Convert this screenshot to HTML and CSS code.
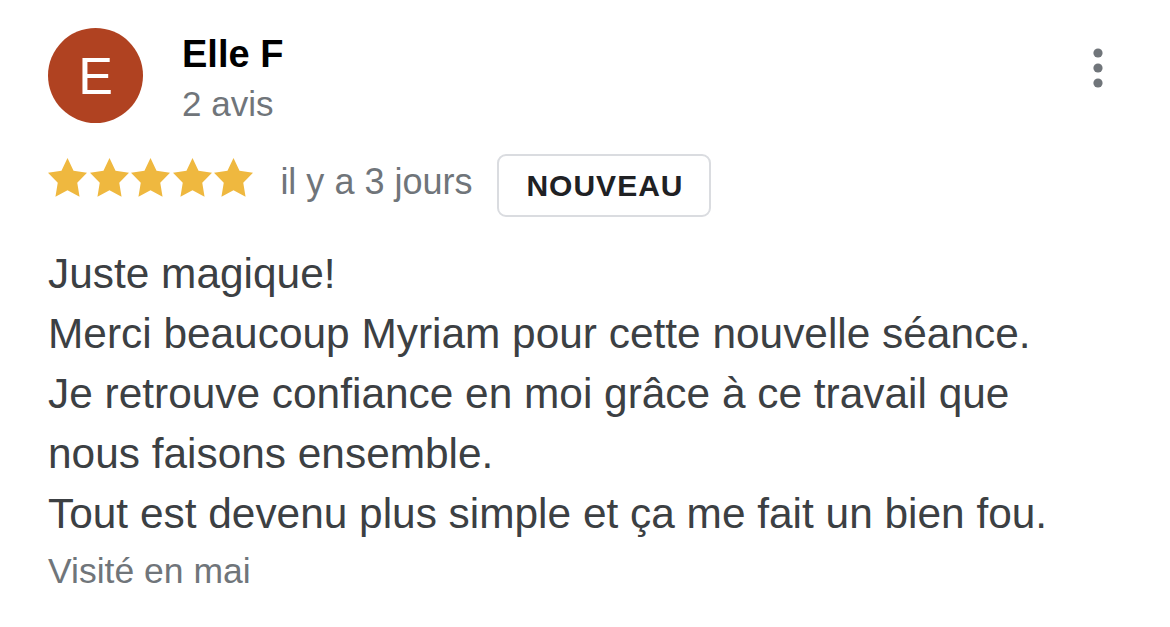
FILE: index.html
```html
<!DOCTYPE html>
<html lang="fr">
<head>
  <meta charset="UTF-8" />
  <meta name="viewport" content="width=device-width, initial-scale=1.0"/>
  <title>Avis</title>
  <link rel="stylesheet" href="styles.css">
</head>
<body>
  <div class="review">
    <div class="review-header">
      <div class="avatar">E</div>
      <div class="author">
        <div class="author-name">Elle F</div>
        <div class="author-meta">2 avis</div>
      </div>
      <button class="menu-button" aria-label="Plus d'options">
        <svg width="48" height="48" viewBox="0 0 48 48">
          <circle cx="24" cy="9" r="4.6" fill="#70757a"/>
          <circle cx="24" cy="24" r="4.6" fill="#70757a"/>
          <circle cx="24" cy="39" r="4.6" fill="#70757a"/>
        </svg>
      </button>
    </div>

    <div class="rating-row">
      <div class="stars">
        <svg class="star" viewBox="2 2 20 19.1" preserveAspectRatio="none"><polygon points="12,2 15.09,8.26 22,9.27 17,14.14 18.18,21.02 12,17.77 5.82,21.02 7,14.14 2,9.27 8.91,8.26"/></svg>
        <svg class="star" viewBox="2 2 20 19.1" preserveAspectRatio="none"><polygon points="12,2 15.09,8.26 22,9.27 17,14.14 18.18,21.02 12,17.77 5.82,21.02 7,14.14 2,9.27 8.91,8.26"/></svg>
        <svg class="star" viewBox="2 2 20 19.1" preserveAspectRatio="none"><polygon points="12,2 15.09,8.26 22,9.27 17,14.14 18.18,21.02 12,17.77 5.82,21.02 7,14.14 2,9.27 8.91,8.26"/></svg>
        <svg class="star" viewBox="2 2 20 19.1" preserveAspectRatio="none"><polygon points="12,2 15.09,8.26 22,9.27 17,14.14 18.18,21.02 12,17.77 5.82,21.02 7,14.14 2,9.27 8.91,8.26"/></svg>
        <svg class="star" viewBox="2 2 20 19.1" preserveAspectRatio="none"><polygon points="12,2 15.09,8.26 22,9.27 17,14.14 18.18,21.02 12,17.77 5.82,21.02 7,14.14 2,9.27 8.91,8.26"/></svg>
      </div>
      <span class="review-date">il y a 3 jours</span>
      <span class="badge">NOUVEAU</span>
    </div>

    <p class="review-text">Juste magique!<br>
Merci beaucoup Myriam pour cette nouvelle séance.<br>
Je retrouve confiance en moi grâce à ce travail que nous faisons ensemble.<br>
Tout est devenu plus simple et ça me fait un bien fou.</p>

    <div class="visit">Visité en mai</div>
  </div>
</body>
</html>
```

FILE: styles.css
```css
html, body {
  margin: 0;
  padding: 0;
  background: #fff;
}

body {
  font-family: "Liberation Sans", Arial, Helvetica, sans-serif;
  color: #3c4043;
  padding: 28px 48px 0 48px;
}

.review-header {
  display: flex;
  align-items: flex-start;
}

.avatar {
  width: 95px;
  height: 95px;
  border-radius: 50%;
  background-color: #b04221;
  color: #fff;
  font-size: 52px;
  line-height: 1;
  display: flex;
  align-items: center;
  justify-content: center;
  flex-shrink: 0;
}

.author {
  margin-left: 39px;
  flex: 1;
}

.author-name {
  margin-top: 4px;
  font-size: 38px;
  line-height: 44px;
  font-weight: bold;
  color: #000;
}

.author-meta {
  margin-top: 6px;
  font-size: 35px;
  line-height: 44px;
  color: #70757a;
}

.menu-button {
  border: none;
  background: none;
  padding: 0;
  margin-top: 16px;
  width: 48px;
  height: 48px;
  cursor: pointer;
}

.menu-button svg {
  display: block;
}

.rating-row {
  display: flex;
  align-items: flex-start;
  margin-top: 28px;
}

.stars {
  display: flex;
  gap: 2.6px;
  margin-top: 4px;
}

.star {
  width: 39px;
  height: 39px;
  fill: #efb83f;
}

.review-date {
  margin-left: 27px;
  margin-top: 6px;
  font-size: 36px;
  line-height: 44px;
  color: #70757a;
}

.badge {
  margin-left: 25px;
  border: 2px solid #dadce0;
  border-radius: 9px;
  padding: 13px 26px 12px 27px;
  font-size: 30px;
  line-height: 34px;
  font-weight: bold;
  letter-spacing: 1px;
  color: #202124;
}

.review-text {
  margin: 27px 0 0;
  max-width: 1030px;
  font-size: 42.4px;
  line-height: 60px;
  color: #3c4043;
}

.visit {
  margin-top: 7px;
  font-size: 35.5px;
  line-height: 40px;
  color: #70757a;
}
```
